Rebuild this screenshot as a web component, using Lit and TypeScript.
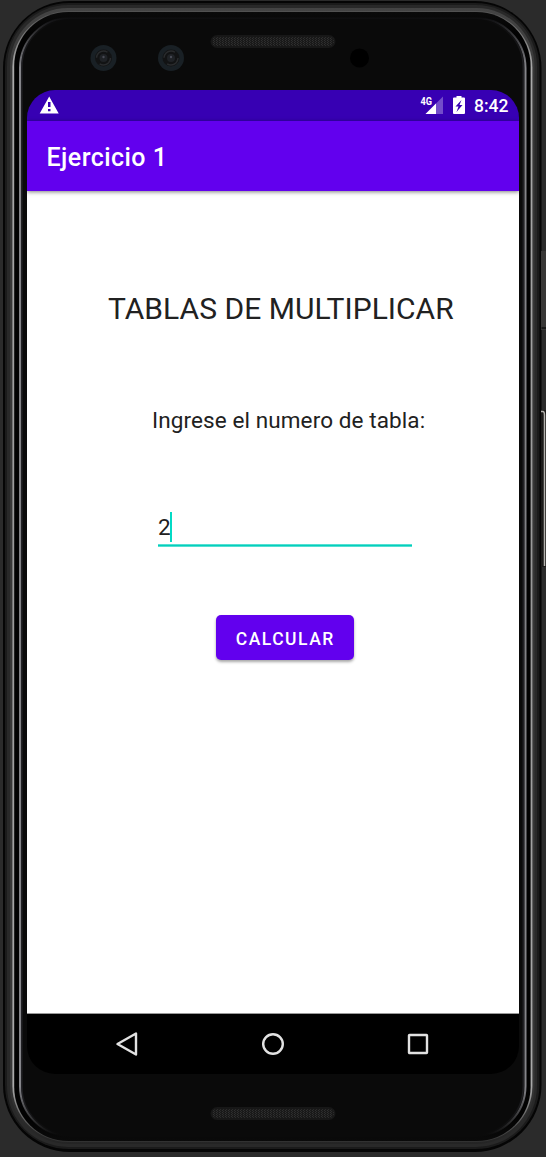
import { LitElement, html, css, svg } from "lit";
import { customElement } from "lit/decorators.js";

// Concentric rounded outlines of the handset body: left, top, right, bottom, radius, fill.
type Ring = [number, number, number, number, number, string];
const rings: Ring[] = [
  [3, 1, 541.5, 1152, 67, "#050505"],
  [5, 3, 539.5, 1149, 64, "#1b1b1b"],
  [7, 5, 537, 1147, 61, "#292929"],
  [10, 8, 534.5, 1144, 58, "url(#band)"],
  [12.4, 11, 532.4, 1142, 56, "url(#edge)"],
  [14.2, 12, 530.6, 1141, 54, "url(#gap)"],
];

@customElement("phone-frame")
export class PhoneFrame extends LitElement {
  static styles = css`
    :host { display: block; width: 546px; height: 1157px; }
    svg { display: block; }
  `;

  grille(y: number) {
    return svg`
      <rect x="210.500" y=${y} width="125" height="13" rx="6.500" fill="#171717" />
      <rect x="212" y=${y + 2} width="122" height="9" rx="4.500" fill="url(#mesh)" />`;
  }

  lens(x: number, y: number) {
    return svg`
      <circle cx=${x} cy=${y} r="13" fill="#192025" />
      <circle cx=${x} cy=${y} r="8.500" fill="#121314" />
      <circle cx=${x} cy=${y} r="7" fill="none" stroke="#292b2d" stroke-width="1.500" stroke-dasharray="15 7" />
      <circle cx=${x} cy=${y} r="4" fill="#1f2226" />
      <circle cx=${x} cy=${y - 1} r="1.200" fill="#484a54" />`;
  }

  render() {
    return html`<svg width="546" height="1157" viewBox="0 0 546 1157">
      <defs>
        <linearGradient id="band" x1="0" y1="0" x2="0" y2="1">
          <stop offset="0" stop-color="#444" /><stop offset=".06" stop-color="#383838" />
          <stop offset=".94" stop-color="#383838" /><stop offset="1" stop-color="#242424" />
        </linearGradient>
        <linearGradient id="edge" x1="0" y1="0" x2="0" y2="1">
          <stop offset="0" stop-color="#505050" /><stop offset=".05" stop-color="#aaa" />
          <stop offset=".5" stop-color="#999" /><stop offset=".95" stop-color="#aaa" />
          <stop offset="1" stop-color="#303030" />
        </linearGradient>
        <linearGradient id="gap" x1="0" y1="0" x2="0" y2="1">
          <stop offset="0" stop-color="#0a0a0a" /><stop offset=".02" stop-color="#020202" />
          <stop offset=".98" stop-color="#020202" /><stop offset="1" stop-color="#0a0a0a" />
        </linearGradient>
        <linearGradient id="glint" gradientUnits="userSpaceOnUse" x1="0" y1="17" x2="0" y2="1137">
          <stop offset="0" stop-color="#0a0a0a" /><stop offset=".002" stop-color="#111113" />
          <stop offset=".045" stop-color="#85858a" />
          <stop offset=".5" stop-color="#808084" /><stop offset=".955" stop-color="#85858a" />
          <stop offset=".998" stop-color="#0a0a0a" />
        </linearGradient>
        <linearGradient id="sheen" gradientUnits="userSpaceOnUse" x1="0" y1="20" x2="0" y2="1134">
          <stop offset="0" stop-color="#0a0a0a" /><stop offset=".04" stop-color="#303036" />
          <stop offset=".96" stop-color="#303036" /><stop offset="1" stop-color="#0a0a0a" />
        </linearGradient>
        <pattern id="mesh" width="3" height="2" patternUnits="userSpaceOnUse">
          <rect width="3" height="2" fill="#191919" />
          <rect width="1" height="1" fill="#303030" /><rect x="1" y="1" width="1" height="1" fill="#2b2b2b" />
        </pattern>
      </defs>
      <rect width="546" height="1157" fill="#2b2b2b" />
      ${rings.map(([l, t, r, b, rad, fill]) => svg`
        <rect x=${l} y=${t} width=${r - l} height=${b - t} rx=${rad} fill=${fill} />`)}
      <rect x="20" y="18" width="505.500" height="1118" rx="50" fill="#0a0a0a" stroke="url(#glint)" stroke-width="2" />
      <rect x="21.800" y="19.500" width="501.500" height="1115" rx="48" fill="none" stroke="url(#sheen)" stroke-width="1.500" opacity=".6" />
      <rect x="541" y="251" width="5" height="79" fill="#383736" />
      <path d="M541.500 328h4.500" stroke="#181818" stroke-width="2" />
      <path d="M541 410h5v157h-5z" fill="#1c1b1a" />
      <path d="M541 411.500h2q1.500 0 1.500 4V566" fill="none" stroke="#b5b3af" stroke-width="1.500" />
      ${this.grille(35)} ${this.grille(1107)}
      ${this.lens(103.5, 58)} ${this.lens(171, 58)}
      <circle cx="359.500" cy="58" r="9.500" fill="#000" />
    </svg>`;
  }
}

@customElement("app-root")
export class AppRoot extends LitElement {
  static styles = css`
    :host { display: grid; width: 546px; height: 1157px; overflow: hidden; font-family: Roboto, sans-serif; }
    phone-frame, .screen { grid-area: 1 / 1; }
    .screen {
      z-index: 1; box-sizing: border-box; margin: 90px 0 0 27px; width: 492px; height: 984px;
      border-radius: 28px; overflow: hidden; display: flex; flex-direction: column;
    }
    .status { height: 31px; flex: none; background: #3700b3; display: flex; align-items: center; color: #fff; padding: 0 10.500px 0 12px; }
    .status .tray { margin-left: auto; display: flex; align-items: center; }
    .status svg { display: block; }
    .clock { font-size: 17.500px; font-weight: 500; line-height: 31px; margin-left: 8px; padding-top: 1px; }
    .bar { height: 70px; flex: none; background: #6200ee; color: #fff; display: flex; align-items: center; padding: 3px 0 0 19.500px;
      box-sizing: border-box; font-size: 25px; font-weight: 500; letter-spacing: .45px; box-shadow: 0 1px 4px rgba(0,0,0,.5); z-index: 1; }
    .body { flex: 1; display: flex; flex-direction: column; align-items: flex-start; background: #fff; color: #212121; }
    .title { margin: 100px 0 0 81px; font-size: 30px; line-height: 36px; letter-spacing: .03px; white-space: nowrap; }
    .label { margin: 79px 0 0 125px; font-size: 22.500px; line-height: 28px; letter-spacing: .1px; white-space: nowrap; }
    .field { margin: 78px 0 0 131px; width: 254px; height: 35px; display: flex; font-size: 22.500px; line-height: 31px; }
    .input { flex: 1; display: flex; background: linear-gradient(#7ce8de, #03cfbc 50%, #7ce8de) 0 100% / 100% 3px no-repeat; }
    .caret { width: 2px; height: 30px; margin-left: -1px; background: #03dac5; }
    .button { margin: 68.400px 0 0 188.500px; width: 138.500px; height: 45px; border: 0; padding: 3px 0 0 1px; border-radius: 5px; background: #6200ee;
      color: #fff; font: 500 17.500px Roboto, sans-serif; letter-spacing: 1.500px; box-shadow: 0 2px 3px rgba(0,0,0,.35); }
    .nav { height: 61px; flex: none; background: #000; border-top: 1px solid #999; box-sizing: border-box; display: flex; padding-left: 27px; }
    .nav span { width: 145.700px; display: grid; place-items: center; }
    .nav svg { fill: none; stroke: #e2e2e2; stroke-width: 2.400; stroke-linejoin: round; }
    .net { font-size: 11px; font-weight: 700; font-family: Roboto, sans-serif; }
  `;

  render() {
    return html`
      <phone-frame></phone-frame>
      <main class="screen">
        <div class="status">
          <svg width="20" height="31" viewBox="0 0 20 31">
            <path fill="#fff" fill-rule="evenodd" d="M10.200 6.500 19.700 23.500H.7zM9 12v5h2.500v-5zM9 19v2.300h2.500v-2.300z" />
          </svg>
          <div class="tray">
            <svg width="24" height="31" viewBox="0 0 24 31">
              <path d="M23 6.500V24H5.500z" fill="#fff" opacity=".3" />
              <path d="M16 13.500V24H5.500z" fill="#fff" />
              <text class="net" x="0.500" y="14.500" fill="#fff" textLength="11.500" lengthAdjust="spacingAndGlyphs">4G</text>
            </svg>
            <svg width="22" height="31" viewBox="0 0 22 31">
              <path fill="#fff" fill-rule="evenodd" d="M12.500 6h5v1.500H20q1 0 1 1V23q0 1-1 1H10q-1 0-1-1V8.500q0-1 1-1h2.500zM17.500 10 11.500 16.500h3L12.500 22l6-7h-3z" />
            </svg>
            <span class="clock">8:42</span>
          </div>
        </div>
        <div class="bar">Ejercicio 1</div>
        <div class="body">
          <div class="title">TABLAS DE MULTIPLICAR</div>
          <div class="label">Ingrese el numero de tabla:</div>
          <div class="field"><div class="input"><span>2</span><span class="caret"></span></div></div>
          <button class="button">CALCULAR</button>
        </div>
        <div class="nav">
          <span><svg width="24" height="26" viewBox="0 0 24 26"><path d="M21 2.500V23.500L2.500 13z" /></svg></span>
          <span><svg width="26" height="26" viewBox="0 0 26 26"><circle cx="13" cy="13" r="9.800" /></svg></span>
          <span><svg width="26" height="26" viewBox="0 0 26 26"><rect x="4" y="4" width="18" height="18" rx=".5" /></svg></span>
        </div>
      </main>`;
  }
}
